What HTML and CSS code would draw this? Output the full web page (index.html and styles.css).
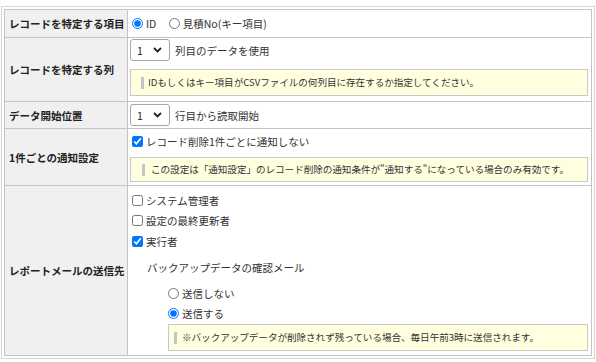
FILE: index.html
```html
<!DOCTYPE html>
<html lang="ja">
<head>
	<meta charset="UTF-8">
	<title>インポート設定</title>
	<link rel="stylesheet" href="styles.css">
</head>
<body>
	<div class="frame">
		<table class="settei">
			<tr class="r1">
				<th>レコードを特定する項目</th>
				<td>
					<label class="opt"><input type="radio" name="key" checked>ID</label>
					<label class="opt"><input type="radio" name="key">見積No(キー項目)</label>
				</td>
			</tr>
			<tr class="r2">
				<th>レコードを特定する列</th>
				<td>
					<div class="line">
						<span class="sel">1<svg width="9" height="6" viewBox="0 0 9 6"><path d="M1 1l3.5 3.5L8 1" fill="none" stroke="#222" stroke-width="1.8"/></svg></span>
						列目のデータを使用
					</div>
					<div class="note">IDもしくはキー項目がCSVファイルの何列目に存在するか指定してください。</div>
				</td>
			</tr>
			<tr class="r3">
				<th>データ開始位置</th>
				<td>
					<div class="line">
						<span class="sel">1<svg width="9" height="6" viewBox="0 0 9 6"><path d="M1 1l3.5 3.5L8 1" fill="none" stroke="#222" stroke-width="1.8"/></svg></span>
						行目から読取開始
					</div>
				</td>
			</tr>
			<tr class="r4">
				<th>1件ごとの通知設定</th>
				<td>
					<label class="chk"><input type="checkbox" checked>レコード削除1件ごとに通知しない</label>
					<div class="note">この設定は「通知設定」のレコード削除の通知条件が"通知する"になっている場合のみ有効です。</div>
				</td>
			</tr>
			<tr class="r5">
				<th>レポートメールの送信先</th>
				<td>
					<label class="chk"><input type="checkbox">システム管理者</label>
					<label class="chk"><input type="checkbox">設定の最終更新者</label>
					<label class="chk third"><input type="checkbox" checked>実行者</label>
					<div class="sub">バックアップデータの確認メール</div>
					<div class="subopts">
						<label class="chk first"><input type="radio" name="bk">送信しない</label>
						<label class="chk"><input type="radio" name="bk" checked>送信する</label>
						<div class="note">※バックアップデータが削除されず残っている場合、毎日午前3時に送信されます。</div>
					</div>
				</td>
			</tr>
		</table>
	</div>
</body>
</html>
```

FILE: styles.css
```css
body{
	margin: 0;
	background-color: #fff;
	font-family: "Noto Sans CJK JP", "Noto Sans", sans-serif;
	font-size: 10.5px;
	color: #333;
}
.frame{
	width: 588px;
	margin-top: 6px;
	margin-left: 1px;
	border: 1px solid #d4d4d4;
	padding: 2px;
	background-color: #fff;
}
.settei{
	width: 100%;
	border-collapse: collapse;
	border: 1px solid #c4c4c4;
}
.settei th,.settei td{
	border: 1px solid #c4c4c4;
	vertical-align: middle;
}
.settei th{
	width: 118px;
	padding: 0 0 0 4px;
	text-align: left;
	font-weight: bold;
	color: #222;
	background-color: #f0f0f0;
	white-space: nowrap;
}
.settei td{
	padding: 0 3px 0 2px;
}
.r1{
	height: 28px;
}
.r2 td{
	padding-top: 1px;
	padding-bottom: 5px;
}
.r3 td{
	padding-top: 2px;
	padding-bottom: 2px;
}
.r4 td{
	padding-top: 3px;
	padding-bottom: 3px;
}
.r5 td{
	padding-top: 4px;
	padding-bottom: 4px;
}
.opt{
	display: inline-flex;
	align-items: center;
	margin-right: 8px;
}
.chk{
	display: flex;
	align-items: center;
	height: 20px;
}
.r4 .chk{
	height: 18px;
}
.r5 .third{
	margin-top: 1px;
}
input{
	width: 11px;
	height: 11px;
	margin: 0 3px 0 2px;
}
.line{
	display: flex;
	align-items: center;
	height: 22px;
}
.sel{
	display: inline-flex;
	align-items: center;
	justify-content: space-between;
	box-sizing: border-box;
	width: 40px;
	height: 22px;
	padding: 0 7px 0 6px;
	margin-right: 5px;
	border: 1px solid #a6a6a6;
	border-radius: 3px;
	color: #222;
	background-color: #fff;
}
.note{
	position: relative;
	box-sizing: border-box;
	height: 27px;
	line-height: 25px;
	padding-left: 17px;
	border: 1px solid #c8c8c8;
	background-color: #ffffe0;
	font-size: 9.6px;
	letter-spacing: -0.05px;
	white-space: nowrap;
	overflow: hidden;
	color: #333;
}
.note:before{
	content: '';
	position: absolute;
	left: 10px;
	top: 7px;
	width: 3px;
	height: 12px;
	background-color: #c4c4c4;
}
.r2 .note{
	margin-top: 8px;
}
.r4 .note{
	margin-top: 7px;
	height: 25px;
	line-height: 23px;
	padding-left: 20px;
}
.r4 .note:before{
	top: 6px;
	left: 11px;
}
.sub{
	margin: 7px 0 0 17px;
	line-height: 20px;
}
.subopts{
	margin-left: 36px;
}
.subopts .first{
	margin-top: 5px;
}
.subopts .note{
	margin-left: 2px;
	margin-top: 1px;
	padding-left: 13px;
}
.subopts .note:before{
	left: 5px;
}
```
